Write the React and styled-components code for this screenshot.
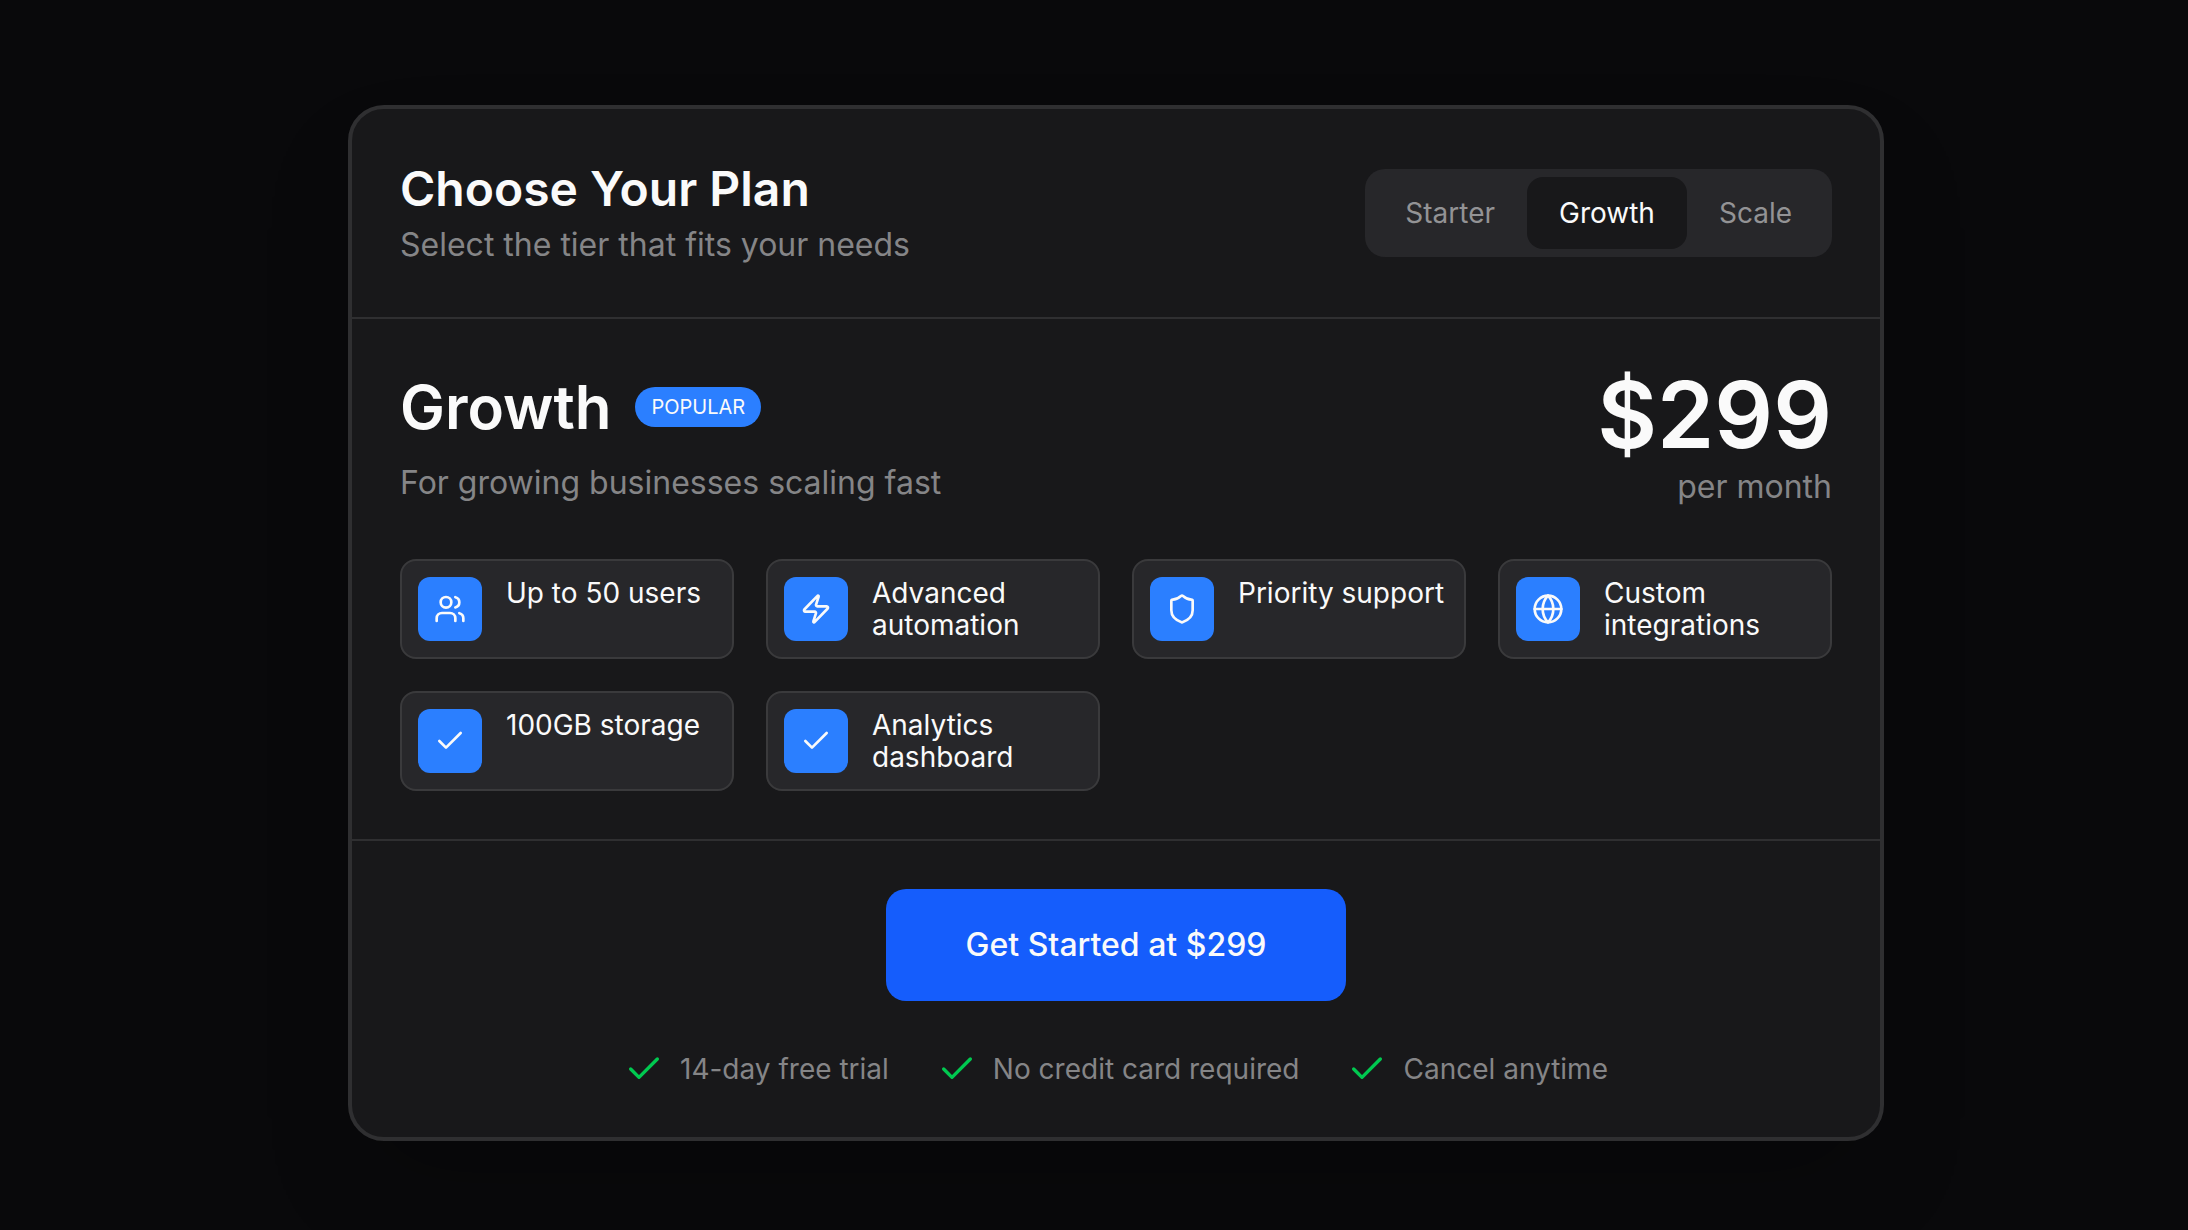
import React, { useState } from "react";
import styled, { createGlobalStyle } from "styled-components";
import { Check, Globe, Shield, Users, Zap } from "lucide-react";

const tiers = ["Starter", "Growth", "Scale"];

const features = [
  { label: "Up to 50 users", icon: Users },
  { label: "Advanced automation", icon: Zap },
  { label: "Priority support", icon: Shield },
  { label: "Custom integrations", icon: Globe },
  { label: "100GB storage", icon: Check },
  { label: "Analytics dashboard", icon: Check }
];

const guarantees = [
  "14-day free trial",
  "No credit card required",
  "Cancel anytime"
];

export default function App() {
  const [selected, setSelected] = useState("Growth");

  return (
    <Page>
      <GlobalStyle />
      <PricingCard>
        <CardHeader>
          <div>
            <Title>Choose Your Plan</Title>
            <Muted>Select the tier that fits your needs</Muted>
          </div>
          <TierSwitch role="group" aria-label="Plan tier">
            {tiers.map(tier => (
              <TierButton
                key={tier}
                type="button"
                $active={tier === selected}
                aria-pressed={tier === selected}
                onClick={() => setSelected(tier)}
              >
                {tier}
              </TierButton>
            ))}
          </TierSwitch>
        </CardHeader>

        <CardBody>
          <PlanRow>
            <PlanInfo>
              <PlanHeading>
                <PlanName>Growth</PlanName>
                <Badge>POPULAR</Badge>
              </PlanHeading>
              <Muted>For growing businesses scaling fast</Muted>
            </PlanInfo>
            <PriceBlock>
              <Price>$299</Price>
              <Muted>per month</Muted>
            </PriceBlock>
          </PlanRow>

          <FeatureGrid>
            {features.map(({ label, icon: Icon }) => (
              <Feature key={label}>
                <FeatureIcon>
                  <Icon size={32} aria-hidden="true" />
                </FeatureIcon>
                <FeatureLabel>{label}</FeatureLabel>
              </Feature>
            ))}
          </FeatureGrid>
        </CardBody>

        <CardFooter>
          <CtaButton type="button">Get Started at $299</CtaButton>
          <GuaranteeList>
            {guarantees.map(text => (
              <Guarantee key={text}>
                <Check size={40} aria-hidden="true" />
                {text}
              </Guarantee>
            ))}
          </GuaranteeList>
        </CardFooter>
      </PricingCard>
    </Page>
  );
}

// Styled Components
const GlobalStyle = createGlobalStyle`
  * {
    box-sizing: border-box;
  }

  body {
    margin: 0;
    background: #09090b;
    color: #fafafa;
    font-family: Inter, "Liberation Sans", sans-serif;
    -webkit-font-smoothing: antialiased;
  }

  h1, h2, p, ul {
    margin: 0;
    padding: 0;
  }

  button {
    border: 0;
    font-family: inherit;
    cursor: pointer;
  }
`;

const Page = styled.main`
  display: flex;
  align-items: center;
  justify-content: center;
  min-height: 100vh;
  padding: 16px 0 0 44px;
`;

const PricingCard = styled.section`
  width: 100%;
  max-width: 1536px;
  border: 4px solid #2f2f31;
  border-radius: 36px;
  background: #18181a;
  box-shadow: 0 50px 100px -24px rgba(0, 0, 0, 0.25);
`;

const CardHeader = styled.header`
  display: flex;
  align-items: center;
  justify-content: space-between;
  gap: 32px;
  padding: 48px;
  border-bottom: 2px solid #2f2f31;
`;

const Title = styled.h1`
  font-size: 48px;
  line-height: 64px;
  font-weight: 600;
`;

const Muted = styled.p`
  color: #858587;
  font-size: 32px;
  line-height: 48px;
`;

const TierSwitch = styled.div`
  display: flex;
  padding: 8px;
  border-radius: 20px;
  background: #27272a;
`;

const TierButton = styled.button`
  padding: 16px 32px;
  border-radius: 16px;
  background: ${props => (props.$active ? "#18181a" : "transparent")};
  color: ${props => (props.$active ? "#fafafa" : "#939395")};
  font-size: 28px;
  line-height: 40px;
`;

const CardBody = styled.div`
  padding: 48px;
  border-bottom: 2px solid #2f2f31;
`;

const PlanRow = styled.div`
  display: flex;
  align-items: center;
  justify-content: space-between;
  margin-bottom: 48px;
`;

const PlanInfo = styled.div`
  display: flex;
  flex-direction: column;
  gap: 16px;
`;

const PlanHeading = styled.div`
  display: flex;
  align-items: center;
  gap: 24px;
`;

const PlanName = styled.h2`
  font-size: 60px;
  line-height: 72px;
  font-weight: 600;
`;

const Badge = styled.span`
  padding: 4px 16px;
  border-radius: 20px;
  background: #2b7fff;
  font-size: 20px;
  line-height: 32px;
`;

const PriceBlock = styled.div`
  text-align: right;
`;

const Price = styled.p`
  font-size: 92px;
  line-height: 96px;
  font-weight: 600;
`;

const FeatureGrid = styled.ul`
  display: grid;
  grid-template-columns: repeat(4, 1fr);
  gap: 32px;
  list-style: none;
`;

const Feature = styled.li`
  display: flex;
  gap: 24px;
  padding: 16px;
  border: 2px solid #3a3a3c;
  border-radius: 16px;
  background: #27272a;
`;

const FeatureIcon = styled.span`
  display: flex;
  flex-shrink: 0;
  align-items: center;
  justify-content: center;
  width: 64px;
  height: 64px;
  border-radius: 12px;
  background: #2b7fff;
`;

const FeatureLabel = styled.span`
  font-size: 28px;
  line-height: 32px;
`;

const CardFooter = styled.footer`
  display: flex;
  flex-direction: column;
  align-items: center;
  gap: 48px;
  padding: 48px;
`;

const CtaButton = styled.button`
  padding: 32px 80px;
  border-radius: 20px;
  background: #155dfc;
  color: #fafafa;
  font-size: 32px;
  line-height: 48px;
  font-weight: 500;
`;

const GuaranteeList = styled.ul`
  display: flex;
  gap: 48px;
  list-style: none;
`;

const Guarantee = styled.li`
  display: flex;
  align-items: center;
  gap: 16px;
  color: #858587;
  font-size: 28px;
  line-height: 40px;

  svg {
    color: #00c950;
  }
`;
